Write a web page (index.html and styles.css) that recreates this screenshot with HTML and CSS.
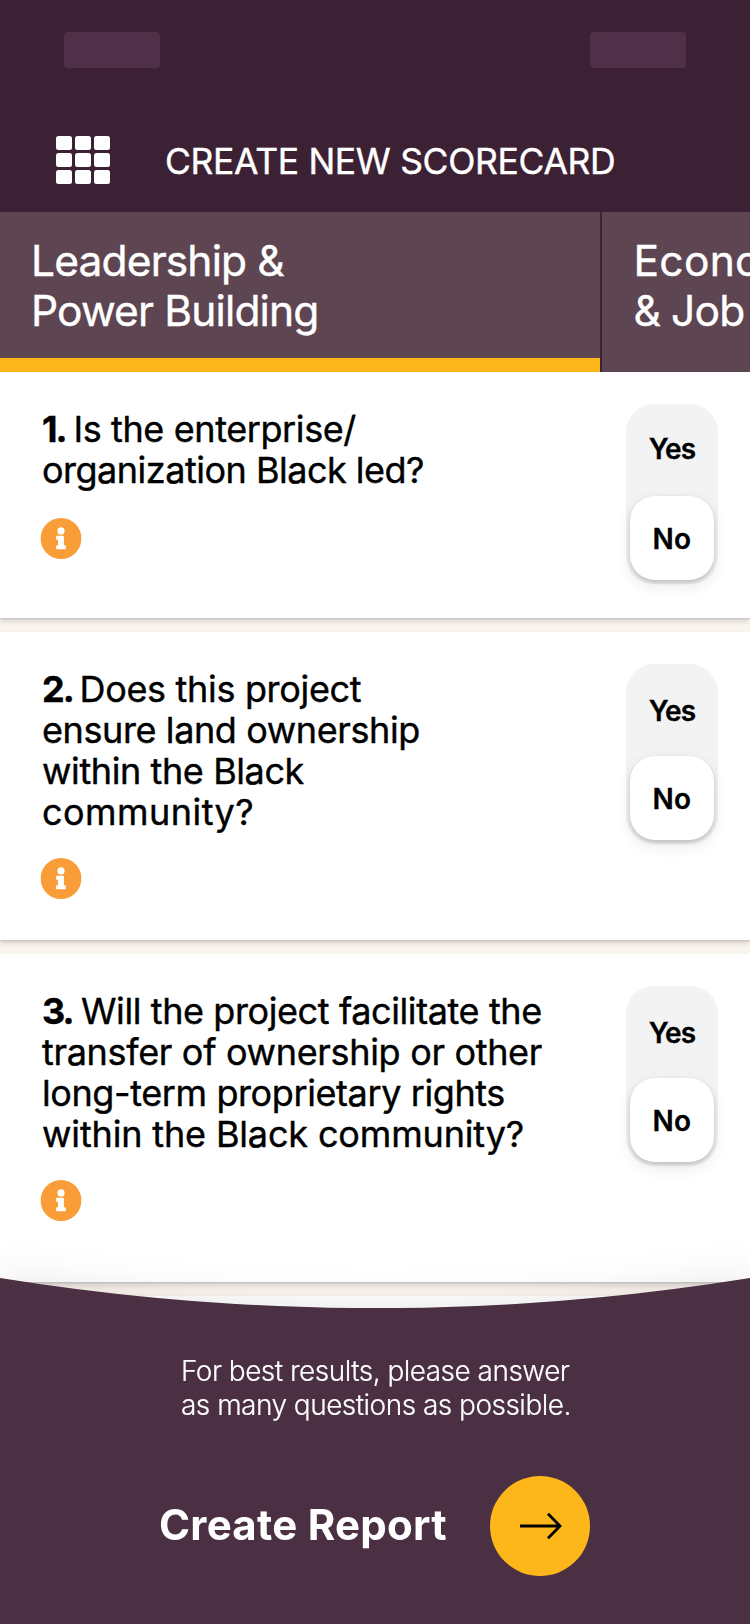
FILE: index.html
```html
<!DOCTYPE html>
<html lang="en">
<head>
<meta charset="utf-8">
<title>Create New Scorecard</title>
<link rel="stylesheet" href="styles.css">
</head>
<body>
<svg class="defs" width="0" height="0" aria-hidden="true">
  <symbol id="info" viewBox="0 0 41 41">
    <circle cx="20.5" cy="20.5" r="20.5" fill="#f99d38"/>
    <circle cx="20.5" cy="12.9" r="3.6" fill="#fff"/>
    <path d="M16.5 17.8H22.4Q23.4 17.8 23.4 18.8V27.2H24.5Q25.4 27.2 25.4 28.1V30.3Q25.4 31.2 24.5 31.2H16.5Q15.6 31.2 15.6 30.3V28.1Q15.6 27.2 16.5 27.2H17.5V21.8H16.5Q15.6 21.8 15.6 20.9V18.7Q15.6 17.8 16.5 17.8Z" fill="#fff"/>
  </symbol>
</svg>
<div class="screen">
  <header class="header">
    <div class="status"><span class="status-block"></span><span class="status-block"></span></div>
    <div class="titlebar">
      <div class="grid-icon"><i></i><i></i><i></i><i></i><i></i><i></i><i></i><i></i><i></i></div>
      <h1 class="title">CREATE NEW SCORECARD</h1>
    </div>
  </header>
  <nav class="tabs">
    <div class="tab tab-active">Leadership &amp;<br>Power Building</div>
    <div class="tab tab-next"><span class="spaced">Economic</span><br>&amp; Job Creation</div>
  </nav>
  <main class="cards">
    <section class="card card-short">
      <div>
        <p class="question"><b class="num num-1">1.</b><span class="ls-b">Is the enterprise/</span><br><span class="ls-a">organization Black led?</span></p>
        <svg class="info"><use href="#info"/></svg>
      </div>
      <div class="toggle"><span class="yes">Yes</span><span class="no">No</span></div>
    </section>
    <section class="card card-mid">
      <div>
        <p class="question"><b class="num num-2">2.</b><span class="ls-c">Does this project</span><br><span class="ls-b">ensure land ownership</span><br><span class="ls-b">within the Black</span><br><span class="ls-e">community?</span></p>
        <svg class="info"><use href="#info"/></svg>
      </div>
      <div class="toggle"><span class="yes">Yes</span><span class="no">No</span></div>
    </section>
    <section class="card card-long">
      <div>
        <p class="question"><b class="num num-3">3.</b><span class="ls-b">Will the project facilitate the</span><br><span class="ls-c">transfer of ownership or other</span><br><span class="ls-b">long-term proprietary rights</span><br><span class="ls-d">within the Black community?</span></p>
        <svg class="info"><use href="#info"/></svg>
      </div>
      <div class="toggle"><span class="yes">Yes</span><span class="no">No</span></div>
    </section>
    <section class="card card-rest"></section>
  </main>
  <footer class="footer">
    <svg class="curve" viewBox="0 0 750 31"><path d="M0 0Q375 60.4 750 0V31H0Z" fill="#4a3042"/></svg>
    <div class="footer-body">
      <p class="note">For best results, please answer<br>as many questions as possible.</p>
      <div class="action">
        <span class="action-label">Create Report</span>
        <span class="action-button">
          <svg width="44" height="28" viewBox="0 0 44 28" fill="none" stroke="#000" stroke-width="2.8"><path d="M2 14H42M30 1.7L42 14L30 26.3"/></svg>
        </span>
      </div>
    </div>
  </footer>
</div>
</body>
</html>
```

FILE: styles.css
```css
* { box-sizing: border-box; }
body { margin: 0; font-family: Inter, "Liberation Sans", sans-serif; color: #000; }
.defs { position: absolute; }
.screen { position: relative; width: 750px; height: 1624px; overflow: hidden; background: #fbf5ef; }

.header { height: 212px; background: #3b2133; }
.status { display: flex; justify-content: space-between; padding: 32px 64px 0; }
.status-block { width: 96px; height: 36px; border-radius: 4px; background: #503048; }
.titlebar { display: flex; align-items: flex-start; gap: 55px; margin-top: 68px; padding-left: 56px; height: 49px; }
.grid-icon { display: grid; grid-template-columns: repeat(3, 16px); grid-auto-rows: 14px; gap: 3px; }
.grid-icon i { border-radius: 2.5px; background: #fff; }
.title { margin: 5px 0 0; color: #fff; font-size: 35.5px; font-weight: 400; line-height: 42px; letter-spacing: -0.34px; white-space: nowrap; -webkit-text-stroke: 0.4px #fff; }

.tabs { display: flex; width: 1202px; height: 160px; gap: 2px; background: #3b2133; }
.tab { width: 600px; padding: 24px 31px 0; color: #fff; background: #5d4552; font-size: 42.5px; line-height: 50px; letter-spacing: -0.85px; -webkit-text-stroke: 0.4px #fff; }
.tab-active { border-bottom: 14px solid #feb71b; }
.tab-next { padding-left: 31.5px; }
.tab .spaced { letter-spacing: 0.3px; }

.cards { display: flex; flex-direction: column; gap: 14px; }
.card { display: flex; justify-content: space-between; flex: none; padding: 32px 32px 0 42px; background: #fff; box-shadow: 0 1px 2px rgba(0, 0, 0, .15), 0 4px 5px rgba(0, 0, 0, .11); }
.card-short { height: 246px; }
.card-mid { height: 308px; }
.card-long { height: 328px; }
.card-rest { height: 328px; }
.question { margin: 5px 0 0; font-size: 36px; line-height: 40.85px; white-space: nowrap; -webkit-text-stroke: 0.4px #000; }
.num { display: inline-block; font-weight: 700; line-height: 40px; letter-spacing: -2px; vertical-align: baseline; }
.num-1 { width: 31.5px; }
.num-2 { width: 37.5px; }
.num-3 { width: 39px; }
.ls-a { letter-spacing: -0.5px; }
.ls-b { letter-spacing: -0.4px; }
.ls-c { letter-spacing: -0.32px; }
.ls-d { letter-spacing: -0.15px; }
.ls-e { letter-spacing: 0.45px; }
.info { display: block; width: 41px; height: 41px; margin: 25.5px 0 0 -1.5px; transform: translateX(-0.5px); }
.card-short .info { margin-top: 27px; }

.toggle { display: flex; flex-direction: column; width: 92px; height: 180px; padding: 0 4px 4px; border-radius: 28px; background: #f3f3f3; font-size: 28px; font-weight: 600; text-align: center; -webkit-text-stroke: 0.3px #000; }
.yes { height: 92px; line-height: 94px; letter-spacing: -0.9px; }
.card-short .yes { line-height: 90px; }
.no { height: 84px; line-height: 86px; border-radius: 25px; background: #fff; letter-spacing: 0.4px; box-shadow: 0 2px 4px rgba(0, 0, 0, .16), 0 6px 16px rgba(0, 0, 0, .09); }

.footer { position: absolute; left: 0; bottom: 0; width: 750px; height: 346px; filter: drop-shadow(0 0 20px rgba(0, 0, 0, .1)); }
.curve { display: block; width: 750px; height: 31px; }
.footer-body { display: flex; flex-direction: column; align-items: center; height: 316px; margin-top: -1px; padding-top: 46px; background: #4a3042; color: #fff; }
.note { width: 388px; margin: 0; font-size: 28px; font-weight: 300; line-height: 34px; letter-spacing: -0.52px; white-space: nowrap; -webkit-text-stroke: 0.2px #fff; }
.action { display: flex; align-items: center; width: 430px; margin-top: 54px; justify-content: space-between; }
.action-label { margin: -2px 0 0 -1px; font-size: 42px; font-weight: 700; line-height: 50px; letter-spacing: 0.25px; }
.action-button { display: flex; align-items: center; justify-content: center; width: 100px; height: 100px; border-radius: 50%; background: #feb71b; }
```
